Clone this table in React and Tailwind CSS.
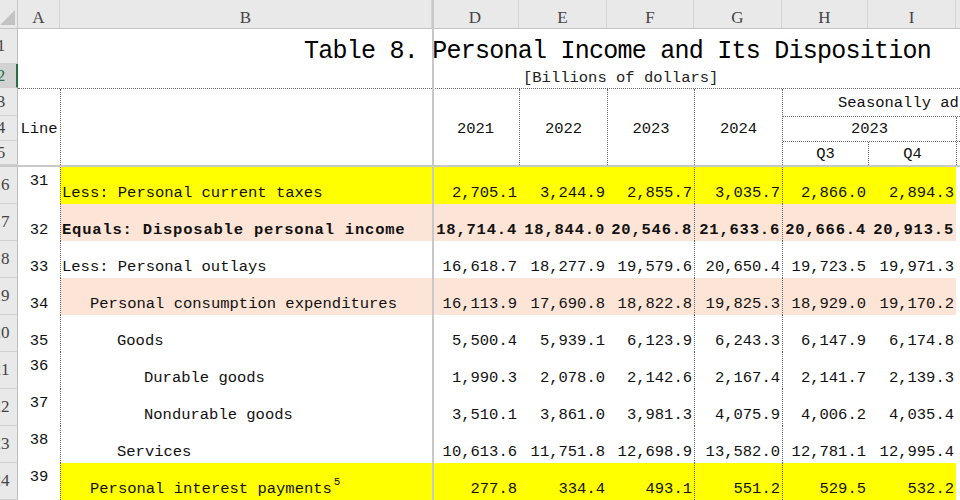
import React from 'react'

const mono = "font-['Liberation_Mono',monospace]"
const serif = "font-['Liberation_Serif',serif]"
const dotted = 'border-dotted border-[#666]'

const fills = { yellow: 'bg-[#ffff00]', peach: 'bg-[#fce4d6]' }
const indents = ['pl-[1px]', 'pl-[29px]', 'pl-[56px]', 'pl-[83px]']

const headCols = [
  { l: 'A', w: 'w-[42px]' },
  { l: 'B', w: 'w-[372px]' },
  { l: 'D', w: 'w-[87px]' },
  { l: 'E', w: 'w-[88px]' },
  { l: 'F', w: 'w-[87px]' },
  { l: 'G', w: 'w-[88px]' },
  { l: 'H', w: 'w-[86px]' },
  { l: 'I', w: 'w-[88px]' },
]

// D..I, G and H carry the dotted rules that run down through the data
const valueCols = [
  { w: 'w-[87px]', border: '' },
  { w: 'w-[88px]', border: '' },
  { w: 'w-[87px]', border: '' },
  { w: 'w-[88px]', border: `border-l ${dotted}` },
  { w: 'w-[86px]', border: `border-l ${dotted}` },
  { w: 'w-[88px]', border: '' },
]

const rows = [
  { hdr: '16', line: '31', label: 'Less: Personal current taxes', indent: 0, fill: 'yellow', aTop: true,
    vals: ['2,705.1', '3,244.9', '2,855.7', '3,035.7', '2,866.0', '2,894.3'] },
  { hdr: '17', line: '32', label: 'Equals: Disposable personal income', indent: 0, fill: 'peach', bold: true,
    vals: ['18,714.4', '18,844.0', '20,546.8', '21,633.6', '20,666.4', '20,913.5'] },
  { hdr: '18', line: '33', label: 'Less: Personal outlays', indent: 0,
    vals: ['16,618.7', '18,277.9', '19,579.6', '20,650.4', '19,723.5', '19,971.3'] },
  { hdr: '19', line: '34', label: 'Personal consumption expenditures', indent: 1, fill: 'peach',
    vals: ['16,113.9', '17,690.8', '18,822.8', '19,825.3', '18,929.0', '19,170.2'] },
  { hdr: '20', line: '35', label: 'Goods', indent: 2,
    vals: ['5,500.4', '5,939.1', '6,123.9', '6,243.3', '6,147.9', '6,174.8'] },
  { hdr: '21', line: '36', label: 'Durable goods', indent: 3, aTop: true,
    vals: ['1,990.3', '2,078.0', '2,142.6', '2,167.4', '2,141.7', '2,139.3'] },
  { hdr: '22', line: '37', label: 'Nondurable goods', indent: 3, aTop: true,
    vals: ['3,510.1', '3,861.0', '3,981.3', '4,075.9', '4,006.2', '4,035.4'] },
  { hdr: '23', line: '38', label: 'Services', indent: 2, aTop: true,
    vals: ['10,613.6', '11,751.8', '12,698.9', '13,582.0', '12,781.1', '12,995.4'] },
  { hdr: '24', line: '39', label: 'Personal interest payments', sup: '5', indent: 1, fill: 'yellow', aTop: true,
    vals: ['277.8', '334.4', '493.1', '551.2', '529.5', '532.2'] },
]

const RowHead = ({ n, className = '', selected }) => (
  <div className={`w-[18px] shrink-0 overflow-hidden flex items-center border-b border-b-[#d0d0d0] ${selected ? 'bg-[#d2d2d2] border-r-2 border-r-[#217346] text-[#217346]' : 'bg-[#e9e9e9] border-r border-r-[#bdbdbd] text-[#444]'} ${className}`}>
    <div className={`-ml-[16px] w-[34px] shrink-0 text-center ${serif} text-[17px] leading-[20px]`}>{n}</div>
  </div>
)

const DataRow = ({ r }) => {
  const fill = r.fill ? fills[r.fill] : ''
  const weight = r.bold ? 'font-bold tracking-[0.8px]' : ''
  return (
    <div className="flex h-[37px] shrink-0">
      <RowHead n={r.hdr} />
      <div className={`w-[42px] shrink-0 flex justify-center ${r.aTop ? 'items-start pt-[5px]' : 'items-end pb-[2px]'}`}>{r.line}</div>
      <div className={`w-[372px] shrink-0 flex items-end pb-[2px] whitespace-nowrap border-l ${dotted} ${fill} ${indents[r.indent]} ${weight}`}>
        <span>
          {r.label}
          {r.sup && <sup className="text-[11px] top-[-8px] ml-[2px]">{r.sup}</sup>}
        </span>
      </div>
      {r.vals.map((v, i) => (
        <div key={i} className={`${valueCols[i].w} shrink-0 flex items-end justify-end pb-[2px] pr-[2px] ${valueCols[i].border} ${fill} ${weight}`}>{v}</div>
      ))}
      <div className="flex-1" />
    </div>
  )
}

export default function App() {
  return (
    <div className={`relative w-[960px] h-[500px] overflow-hidden bg-white flex flex-col ${mono} text-[15.5px] leading-[18px] text-[#111]`}>
      {/* column letters */}
      <div className="flex h-[29px] shrink-0 bg-[#e9e9e9] border-b border-[#c4c4c4]">
        <div className="w-[18px] shrink-0 border-r border-[#c4c4c4] overflow-hidden">
          <svg width="18" height="28" className="block">
            <polygon points="0,25 15,10 15,25" fill="#c3c3c3" />
          </svg>
        </div>
        {headCols.map(c => (
          <div key={c.l} className={`${c.w} shrink-0 flex items-end justify-center border-r border-[#d4d4d4] ${serif} text-[17px] leading-[20px] text-[#444]`}>{c.l}</div>
        ))}
        <div className="flex-1" />
      </div>

      {/* title rows */}
      <div className="flex h-[35px] shrink-0">
        <RowHead n="1" />
        <div className="flex-1 pt-[9px] pl-[286px] whitespace-nowrap text-[25px] leading-[28px] tracking-[-0.75px] text-black">
          Table 8. Personal Income and Its Disposition
        </div>
      </div>
      <div className="flex h-[24px] shrink-0">
        <RowHead n="2" selected />
        <div className="flex-1 pt-[5px] pl-[505px] whitespace-nowrap text-[#222]">[Billions of dollars]</div>
      </div>

      {/* column headings */}
      <div className="flex h-[77px] shrink-0">
        <div className="w-[18px] shrink-0 flex flex-col">
          <RowHead n="3" className="h-[28px]" />
          <RowHead n="4" className="h-[25px]" />
          <RowHead n="5" className="h-[24px]" />
        </div>
        <div className={`flex flex-1 border-t ${dotted}`}>
          <div className="w-[42px] shrink-0 flex items-center justify-center pt-[4px]">Line</div>
          <div className={`w-[372px] shrink-0 border-l ${dotted}`} />
          <div className="w-[87px] shrink-0 flex items-center justify-center pt-[4px]">2021</div>
          <div className={`w-[88px] shrink-0 flex items-center justify-center pt-[4px] border-l ${dotted}`}>2022</div>
          <div className={`w-[87px] shrink-0 flex items-center justify-center pt-[4px] border-l ${dotted}`}>2023</div>
          <div className={`w-[88px] shrink-0 flex items-center justify-center pt-[4px] border-l ${dotted}`}>2024</div>
          <div className={`flex-1 flex flex-col border-l ${dotted}`}>
            <div className="h-[27px] shrink-0 flex items-center pl-[55px] whitespace-nowrap">Seasonally adjusted at annual rates</div>
            <div className={`h-[25px] shrink-0 flex border-t ${dotted}`}>
              <div className="w-[173px] shrink-0 flex items-center justify-center">2023</div>
              <div className={`flex-1 border-l ${dotted}`} />
            </div>
            <div className={`flex-1 flex border-t ${dotted}`}>
              <div className="w-[85px] shrink-0 flex items-center justify-center">Q3</div>
              <div className={`w-[88px] shrink-0 flex items-center justify-center border-l ${dotted}`}>Q4</div>
              <div className={`flex-1 border-l ${dotted}`} />
            </div>
          </div>
        </div>
      </div>

      {/* frozen pane rule */}
      <div className="h-[2px] shrink-0 bg-[#c8c8c8]" />

      {rows.map(r => <DataRow key={r.hdr} r={r} />)}

      <div className="absolute left-[432px] top-0 h-full w-[2px] bg-[#c8c8c8]" />
    </div>
  )
}
